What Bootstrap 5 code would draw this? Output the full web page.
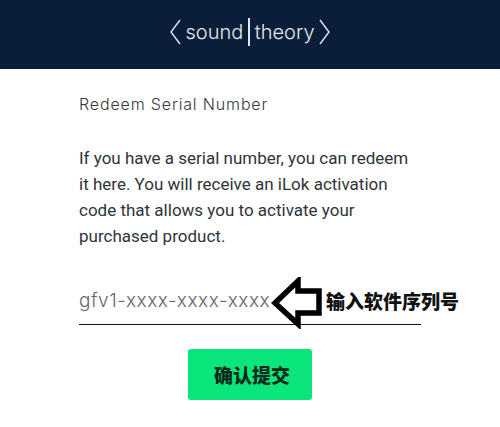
<!DOCTYPE html>
<html lang="en">
<head>
<meta charset="utf-8">
<title>Redeem Serial Number</title>
<link href="https://cdn.jsdelivr.net/npm/bootstrap@5.3.0/dist/css/bootstrap.min.css" rel="stylesheet">
<style>
html,body{height:100%;overflow:hidden;background:#fff}
.st-head{height:69px;padding-bottom:5px;background:#0a1e3a;color:#e4e8ee;font-family:Inter,"Liberation Sans",sans-serif;font-weight:300;font-size:20px}
.st-bar{width:1.5px;height:28px;background:#e4e8ee;margin:0 5px}
.st-main{padding:25px 79px 0;height:358px}
.st-title{font-family:Inter,"Liberation Sans",sans-serif;font-weight:300;font-size:16px;letter-spacing:.85px;line-height:20px;color:#333a40;margin:0 0 31px}
.st-copy{font-family:Roboto,"Liberation Sans",sans-serif;font-size:17px;line-height:26px;color:#2f3439;margin:0}
.st-field{position:relative;height:48px;margin-top:28px;width:342px;border-bottom:1px solid #111;font-family:Inter,"Liberation Sans",sans-serif;font-weight:300;font-size:19px;letter-spacing:.55px;line-height:48px;color:#666}
.st-arrow{position:absolute;left:191px;top:0}
.st-note{position:absolute;left:247px;top:0;font:900 19px/48px "Noto Sans CJK SC",sans-serif;color:#111;white-space:nowrap;letter-spacing:0}
.st-btn{width:124px;height:51px;margin-top:24px;padding:0 0 0 4px;background:#0ae67c;border:0;border-radius:3px;font:900 19px "Noto Sans CJK SC",sans-serif;color:#0d2a1c}
.st-btn:hover{background:#0ae67c;color:#0d2a1c}
.st-wrap{width:342px}
</style>
</head>
<body>
<header class="st-head d-flex align-items-center justify-content-center">
<svg width="12" height="26" viewBox="0 0 12 26" fill="none" stroke="#e4e8ee" stroke-width="1.4"><path d="M11 1 2 13l9 12"/></svg>
<span class="ms-1">sound</span><span class="st-bar"></span><span>theory</span>
<svg class="ms-1" width="12" height="26" viewBox="0 0 12 26" fill="none" stroke="#e4e8ee" stroke-width="1.4"><path d="M1 1l9 12-9 12"/></svg>
</header>
<main class="st-main">
<h1 class="st-title">Redeem Serial Number</h1>
<p class="st-copy">If you have a serial number, you can redeem it here. You will receive an iLok activation code that allows you to activate your purchased product.</p>
<div class="st-field">gfv1-xxxx-xxxx-xxxx
<svg class="st-arrow" width="52" height="52" viewBox="0 0 52 52"><path d="M28 4 5 26l23 21V36h21V14H28z" fill="#fff" stroke="#000" stroke-width="5.5"/></svg>
<span class="st-note">输入软件序列号</span>
</div>
<div class="st-wrap d-flex justify-content-center">
<button class="btn st-btn" type="button">确认提交</button>
</div>
</main>
<script src="https://cdn.jsdelivr.net/npm/bootstrap@5.3.0/dist/js/bootstrap.bundle.min.js"></script>
</body>
</html>
